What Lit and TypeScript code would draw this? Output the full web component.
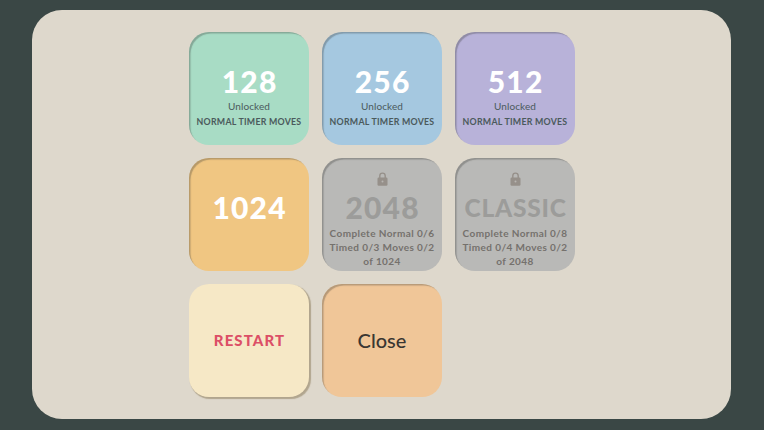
import { LitElement, html, css } from "lit";
import { customElement } from "lit/decorators.js";

const lockIcon = html`<svg class="lock" viewBox="0 0 11 14" width="11" height="14" aria-hidden="true">
  <path d="M2.8 6V3.8a2.7 2.7 0 0 1 5.4 0V6" fill="none" stroke="#96908a" stroke-width="1.4"/>
  <rect x="0.5" y="5.6" width="10" height="8.2" rx="1.2" fill="#96908a"/>
  <circle cx="5.5" cy="9.6" r="1" fill="#b8b6b2"/>
</svg>`;

@customElement("app-root")
export class AppRoot extends LitElement {
  static styles = css`
    :host {
      display: flex;
      width: 764px;
      height: 430px;
      box-sizing: border-box;
      padding: 10px 33px 11px 32px;
      background: #3a4745;
      font-family: "Lato", "Noto Sans", sans-serif;
      overflow: hidden;
    }
    .panel {
      flex: 1;
      background: #ded8cc;
      border-radius: 30px;
      display: flex;
      justify-content: center;
      padding: 22px 0 0 1px;
    }
    .grid {
      display: grid;
      grid-template-columns: repeat(3, 120px);
      grid-auto-rows: 113px;
      gap: 13px;
    }
    .card {
      box-sizing: border-box;
      border-radius: 20px;
      display: flex;
      flex-direction: column;
      align-items: center;
      padding-top: 32px;
      text-align: center;
      box-shadow: inset 2px 2px 1px -0.5px rgba(50, 50, 45, 0.3);
    }
    .mint { background: #a8dcc5; }
    .blue { background: #a5c8e0; }
    .purple { background: #b8b2d9; }
    .orange { background: #f0c682; }
    .locked { background: #b9b9b7; padding-top: 14px; }
    .peach { background: #f0c698; }
    .cream {
      background: #f6e8c6;
      box-shadow: 1.5px 1.5px 1px rgba(110, 90, 50, 0.4);
    }
    .center { justify-content: center; padding: 0 0 2px; }
    .num {
      font-size: 30px;
      font-weight: 900;
      line-height: 34px;
      color: #fff;
      letter-spacing: 1.2px;
      padding-left: 1.2px;
    }
    .status {
      font-size: 10px;
      line-height: 14px;
      margin-top: 1px;
      letter-spacing: 0.1px;
      color: #4b5a5c;
    }
    .modes {
      font-size: 8.8px;
      font-weight: 700;
      line-height: 16px;
      letter-spacing: 0.25px;
      margin-top: 1px;
      color: #4b5a5c;
      white-space: nowrap;
    }
    .lock { display: block; margin-bottom: 4px; }
    .locked .num { color: #9c9c9a; }
    .locked .num.small {
      font-size: 24.5px;
      letter-spacing: 0.8px;
      line-height: 36px;
      margin-bottom: -2px;
    }
    .locked .req {
      font-size: 10px;
      font-weight: 700;
      line-height: 14px;
      letter-spacing: 0.4px;
      margin-top: 2px;
      color: #75716d;
      white-space: nowrap;
    }
    .restart {
      font-size: 15px;
      font-weight: 900;
      letter-spacing: 1.1px;
      padding-left: 1px;
      color: #dc4f66;
    }
    .close {
      font-size: 20px;
      font-weight: 500;
      color: #3a3632;
    }
  `;

  private unlocked(n: string, cls: string) {
    return html`<div class="card ${cls}">
      <div class="num">${n}</div>
      <div class="status">Unlocked</div>
      <div class="modes">NORMAL TIMER MOVES</div>
    </div>`;
  }

  private locked(n: string, numCls: string, a: string, b: string, c: string) {
    return html`<div class="card locked">
      ${lockIcon}
      <div class="num ${numCls}">${n}</div>
      <div class="req">${a}<br />${b}<br />${c}</div>
    </div>`;
  }

  render() {
    return html`<div class="panel">
      <div class="grid">
        ${this.unlocked("128", "mint")}
        ${this.unlocked("256", "blue")}
        ${this.unlocked("512", "purple")}
        <div class="card orange"><div class="num">1024</div></div>
        ${this.locked("2048", "", "Complete Normal 0/6", "Timed 0/3 Moves 0/2", "of 1024")}
        ${this.locked("CLASSIC", "small", "Complete Normal 0/8", "Timed 0/4 Moves 0/2", "of 2048")}
        <div class="card cream restart center">RESTART</div>
        <div class="card peach close center">Close</div>
      </div>
    </div>`;
  }
}
